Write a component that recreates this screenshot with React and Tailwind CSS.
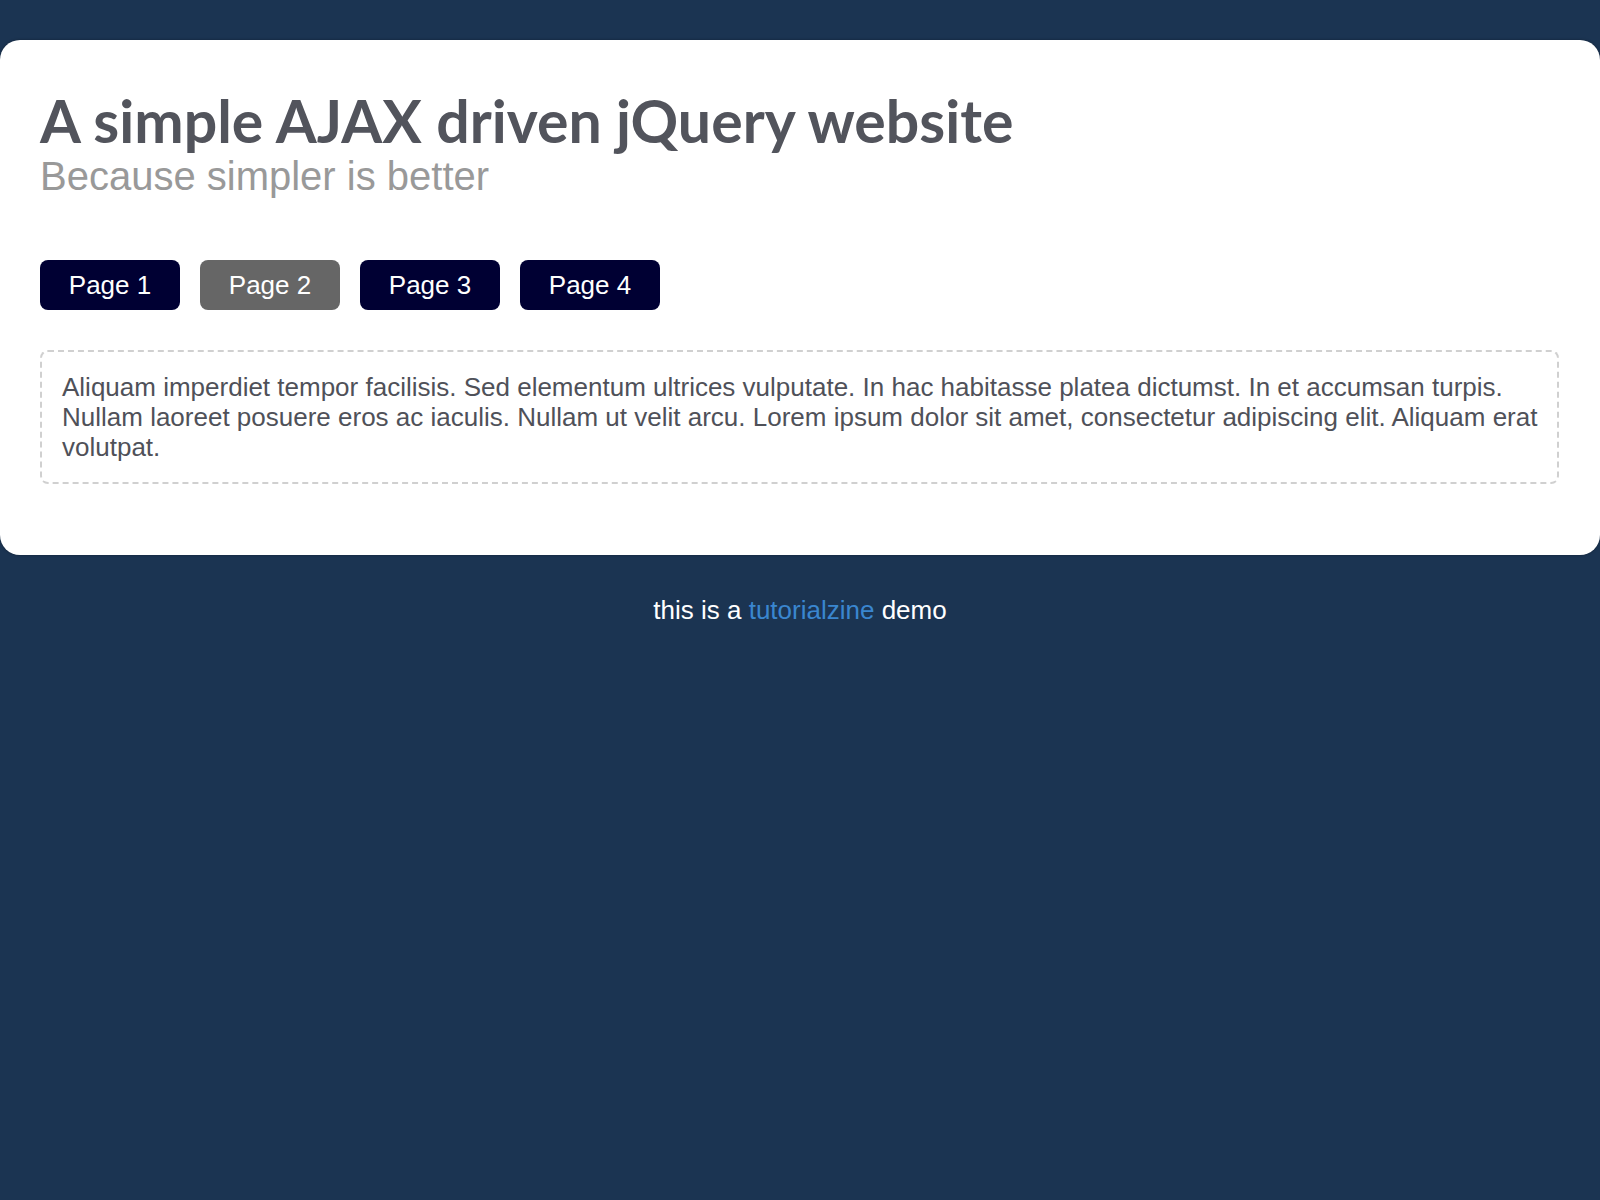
export default function App() {
  const pages = ["Page 1", "Page 2", "Page 3", "Page 4"];
  return (
    <div className="min-h-[1200px] bg-[#1b3452] pt-10 font-['Liberation_Sans',Arial,sans-serif]">
      <div className="bg-white rounded-[20px] shadow-[0_0_3px_rgba(0,0,0,0.35)] px-10 pt-[49px] pb-[71px]">
        <h1 className="font-['Lato',sans-serif] font-bold text-[59px] leading-[64px] text-[#52545c]">
          A simple AJAX driven jQuery website
        </h1>
        <h2 className="text-[40px] leading-[46px] text-[#999999]">Because simpler is better</h2>
        <ul className="flex gap-5 mt-[61px]">
          {pages.map((p, i) => (
            <li key={p}>
              <a
                className={
                  "flex w-[140px] h-[50px] items-center justify-center rounded-[8px] text-[26px] text-white " +
                  (i === 1 ? "bg-[#666666]" : "bg-[#000033]")
                }
              >
                {p}
              </a>
            </li>
          ))}
        </ul>
        <div className="mt-[40px] mr-[1px] border-2 border-dashed border-[#d0d0d0] rounded-[8px] pl-5 pr-4 pt-[20px] pb-[20px] text-[26px] leading-[30px] text-[#4f5159]">
          Aliquam imperdiet tempor facilisis. Sed elementum ultrices vulputate. In hac habitasse platea dictumst. In et accumsan turpis. Nullam laoreet posuere eros ac iaculis. Nullam ut velit arcu. Lorem ipsum dolor sit amet, consectetur adipiscing elit. Aliquam erat volutpat.
        </div>
      </div>
      <p className="mt-10 text-center text-[26px] leading-[30px] text-white">
        this is a <a className="text-[#3a86cf]">tutorialzine</a> demo
      </p>
    </div>
  );
}
